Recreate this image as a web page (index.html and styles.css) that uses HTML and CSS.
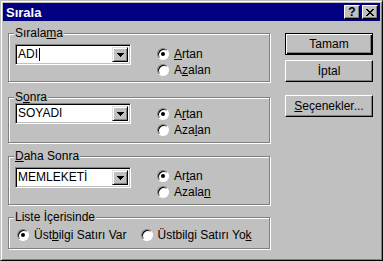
FILE: index.html
```html
<!DOCTYPE html>
<html>
<head>
  <title>Sırala</title>
  <link rel="stylesheet" href="styles.css">
</head>
<body>
  <div class="window">
    <div class="titlebar">
      <span class="title">Sırala</span>
      <span class="tb-btn help">?</span>
      <span class="tb-btn close">
        <svg width="8" height="7" viewBox="0 0 8 7" shape-rendering="crispEdges"><path d="M0 0h2v1H0zM6 0h2v1H6zM1 1h2v1H1zM5 1h2v1H5zM2 2h4v1H2zM3 3h2v1H3zM2 4h4v1H2zM1 5h2v1H1zM5 5h2v1H5zM0 6h2v1H0zM6 6h2v1H6z" fill="#000"/></svg>
      </span>
    </div>

    <div class="content">
      <div class="groups">
        <fieldset class="group g1">
          <legend>Sırala<u>m</u>a</legend>
          <div class="row">
            <div class="combo"><span class="value">ADI<i class="caret"></i></span><span class="drop"><svg width="7" height="4" viewBox="0 0 7 4" shape-rendering="crispEdges"><path d="M0 0h7v1H0zM1 1h5v1H1zM2 2h3v1H2zM3 3h1v1H3z" fill="#000"/></svg></span></div>
            <div class="radios">
              <label class="radio"><span class="dot on"></span><span><u>A</u>rtan</span></label>
              <label class="radio"><span class="dot"></span><span>A<u>z</u>alan</span></label>
            </div>
          </div>
        </fieldset>

        <fieldset class="group g2">
          <legend>S<u>o</u>nra</legend>
          <div class="row">
            <div class="combo"><span class="value">SOYADI</span><span class="drop"><svg width="7" height="4" viewBox="0 0 7 4" shape-rendering="crispEdges"><path d="M0 0h7v1H0zM1 1h5v1H1zM2 2h3v1H2zM3 3h1v1H3z" fill="#000"/></svg></span></div>
            <div class="radios">
              <label class="radio"><span class="dot on"></span><span>A<u>r</u>tan</span></label>
              <label class="radio"><span class="dot"></span><span>Aza<u>l</u>an</span></label>
            </div>
          </div>
        </fieldset>

        <fieldset class="group g3">
          <legend><u>D</u>aha Sonra</legend>
          <div class="row">
            <div class="combo"><span class="value">MEMLEKETİ</span><span class="drop"><svg width="7" height="4" viewBox="0 0 7 4" shape-rendering="crispEdges"><path d="M0 0h7v1H0zM1 1h5v1H1zM2 2h3v1H2zM3 3h1v1H3z" fill="#000"/></svg></span></div>
            <div class="radios">
              <label class="radio"><span class="dot on"></span><span>Ar<u>t</u>an</span></label>
              <label class="radio"><span class="dot"></span><span>Azala<u>n</u></span></label>
            </div>
          </div>
        </fieldset>

        <fieldset class="group g4">
          <legend>Liste İçerisinde</legend>
          <div class="row inline">
            <label class="radio"><span class="dot on"></span><span>Üst<u>b</u>ilgi Satırı Var</span></label>
            <label class="radio"><span class="dot"></span><span>Üstbilgi Satırı Yo<u>k</u></span></label>
          </div>
        </fieldset>
      </div>

      <div class="actions">
        <button class="btn default">Tamam</button>
        <button class="btn">İptal</button>
        <button class="btn options"><u>S</u>eçenekler...</button>
      </div>
    </div>
  </div>
</body>
</html>
```

FILE: styles.css
```css
* {
  box-sizing: border-box;
}

body {
  margin: 0;
  font-family: "Liberation Sans", Arial, sans-serif;
  font-size: 12px;
  color: #000000;
}

u {
  text-decoration: underline;
  text-underline-offset: 1px;
}

.window {
  width: 383px;
  height: 261px;
  background-color: #c0c0c0;
  border: 1px solid;
  border-color: #c0c0c0 #000000 #000000 #c0c0c0;
  box-shadow: inset 1px 1px #ffffff, inset -1px -1px #808080;
  padding: 2px;
}

.titlebar {
  height: 18px;
  background-color: #000080;
  color: #ffffff;
  display: flex;
  align-items: center;
  padding: 0 2px 0 3px;
  font-weight: bold;
  font-size: 13px;
}

.title {
  flex: 1;
}

.tb-btn {
  width: 16px;
  height: 14px;
  margin-left: 2px;
  display: flex;
  align-items: center;
  justify-content: center;
  background-color: #c0c0c0;
  color: #000000;
  border: 1px solid;
  border-color: #ffffff #000000 #000000 #ffffff;
  box-shadow: inset -1px -1px #808080;
  font-size: 12px;
  line-height: 1;
}

.content {
  display: flex;
}

.groups {
  display: flex;
  flex-direction: column;
  padding: 5px 0 0 5px;
}

.group {
  margin: 0;
  width: 262px;
  border: 1px solid #808080;
  box-shadow: inset 1px 1px #ffffff, 1px 1px #ffffff;
  padding: 0 6px;
}

.group legend {
  padding: 0 1px;
  margin-left: -1px;
  line-height: 15px;
  background-color: #c0c0c0;
}

.g1 {
  height: 56px;
  padding-top: 3px;
}

.g2 {
  height: 53px;
  margin-top: 8px;
  padding-top: 0;
}

.g2 .row {
  margin-top: -2px;
}

.g2 .radios {
  padding-top: 3px;
}

.g3 {
  height: 56px;
  margin-top: 6px;
  padding-top: 3px;
}

.g3 .radios {
  padding-top: 1px;
}

.g4 {
  height: 39px;
  margin-top: 5px;
  padding-top: 2px;
}

.row {
  display: flex;
  align-items: flex-start;
}

.combo {
  width: 116px;
  height: 21px;
  display: flex;
  background-color: #ffffff;
  border: 1px solid;
  border-color: #808080 #ffffff #ffffff #808080;
  box-shadow: inset 1px 1px #000000, inset -1px -1px #c0c0c0;
  padding: 2px;
}

.value {
  flex: 1;
  display: flex;
  align-items: center;
  line-height: 17px;
}

.caret {
  width: 1px;
  height: 13px;
  background-color: #000000;
  margin-left: 1px;
}

.drop {
  width: 16px;
  display: flex;
  align-items: center;
  justify-content: center;
  background-color: #c0c0c0;
  border: 1px solid;
  border-color: #dfdfdf #000000 #000000 #dfdfdf;
  box-shadow: inset 1px 1px #ffffff, inset -1px -1px #808080;
}

.radios {
  margin-left: 26px;
  padding-top: 2px;
}

.radio {
  display: flex;
  align-items: center;
  height: 16px;
  gap: 5px;
}

.dot {
  width: 12px;
  height: 12px;
  border-radius: 50%;
  border: 1px solid;
  border-color: #808080 #ffffff #ffffff #808080;
  background-color: #ffffff;
  box-shadow: inset 1px 1px #000000;
  display: flex;
  align-items: center;
  justify-content: center;
}

.dot.on::after {
  content: "";
  width: 4px;
  height: 4px;
  border-radius: 50%;
  background-color: #000000;
}

.row.inline {
  gap: 14px;
  padding-left: 2px;
}

.actions {
  display: flex;
  flex-direction: column;
  padding: 12px 0 0 15px;
}

.btn {
  width: 88px;
  height: 22px;
  margin: 0 0 5px 0;
  padding: 0;
  font: inherit;
  color: #000000;
  background-color: #c0c0c0;
  border: 1px solid;
  border-color: #ffffff #000000 #000000 #ffffff;
  box-shadow: inset -1px -1px #808080;
}

.btn.default {
  border-color: #000000;
  box-shadow: inset 1px 1px #ffffff, inset -1px -1px #000000, inset -2px -2px #808080;
}

.btn.options {
  margin-top: 8px;
}
```
